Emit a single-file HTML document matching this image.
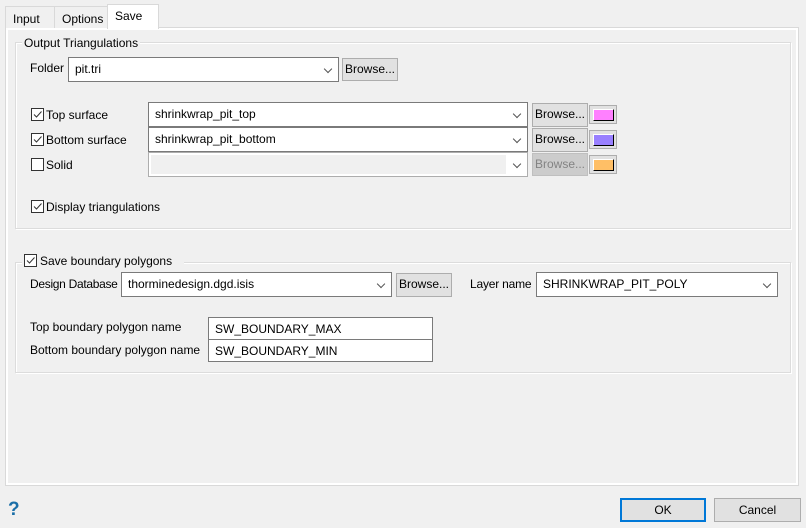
<!DOCTYPE html>
<html><head><style>
*{box-sizing:border-box;margin:0;padding:0}
body{width:806px;height:528px;background:#f0f0f0;font-family:"Liberation Sans",sans-serif;font-size:12px;color:#000;position:relative;overflow:hidden}
.a{position:absolute}
.t{position:absolute;white-space:nowrap;line-height:14px}
.tab{position:absolute;border:1px solid #d9d9d9;border-bottom:none;background:#f0f0f0;padding:5px 0 0 7px}
.panel{position:absolute;left:5px;top:27px;width:794px;height:459px;border:1px solid #d9d9d9;box-shadow:inset 0 0 0 2px #fff}
.grp{position:absolute;border:1px solid #dcdcdc;box-shadow:1px 1px 0 #fff, inset 1px 1px 0 #fff}
.cb{position:absolute;width:13px;height:13px;border:1px solid #333;background:#fff}
.cb svg{position:absolute;left:0;top:0}
.combo{position:absolute;background:#fff;border:1px solid #7a7a7a;padding:4px 0 0 6px;line-height:14px}
.combo.l{border-color:#adadad}
.combo:after{content:"";position:absolute;right:7px;top:8px;width:5px;height:5px;border-right:1px solid #555;border-bottom:1px solid #555;transform:rotate(45deg)}
.btn{position:absolute;background:#e1e1e1;border:1px solid #adadad;text-align:center;line-height:21px}
.sw{position:absolute;width:28px;height:19px;border:1px solid #adadad;background:#e1e1e1}
.sw i{position:absolute;left:3px;top:3px;width:21px;height:12px;border:1px solid #000;border-top-color:#fff;border-left-color:#fff}
.inp{position:absolute;background:#fff;border:1px solid #7a7a7a;padding:4px 0 0 6px;line-height:14px}
</style></head><body>
<div class="panel"></div>
<div class="tab" style="left:5px;top:6px;width:50px;height:22px">Input</div>
<div class="tab" style="left:54px;top:6px;width:54px;height:22px">Options</div>
<div class="tab" style="left:107px;top:4px;width:52px;height:25px;background:#fff;border-color:#d9d9d9;padding-top:4px">Save</div>

<div class="grp" style="left:15px;top:42px;width:776px;height:187px"></div>
<div class="t" style="left:22px;top:36px;background:#f0f0f0;padding:0 2px">Output Triangulations</div>
<div class="t" style="left:30px;top:61px">Folder</div>
<div class="combo" style="left:68px;top:57px;width:271px;height:25px">pit.tri</div>
<div class="btn" style="left:342px;top:58px;width:56px;height:23px">Browse...</div>

<div class="cb" style="left:31px;top:108px"><svg width="11" height="11"><path d="M2 5.5 L4.5 8 L9.5 2.5" fill="none" stroke="#333" stroke-width="1"/></svg></div>
<div class="t" style="left:46px;top:108px">Top surface</div>
<div class="combo" style="left:148px;top:102px;width:380px;height:25px">shrinkwrap_pit_top</div>
<div class="btn" style="left:532px;top:103px;width:56px;height:24px">Browse...</div>
<div class="sw" style="left:589px;top:105px"><i style="background:#ff80ff"></i></div>

<div class="cb" style="left:31px;top:133px"><svg width="11" height="11"><path d="M2 5.5 L4.5 8 L9.5 2.5" fill="none" stroke="#333" stroke-width="1"/></svg></div>
<div class="t" style="left:46px;top:133px">Bottom surface</div>
<div class="combo" style="left:148px;top:127px;width:380px;height:25px">shrinkwrap_pit_bottom</div>
<div class="btn" style="left:532px;top:128px;width:56px;height:24px">Browse...</div>
<div class="sw" style="left:589px;top:130px"><i style="background:#9980ff"></i></div>

<div class="cb" style="left:31px;top:158px"></div>
<div class="t" style="left:46px;top:158px">Solid</div>
<div class="combo l" style="left:148px;top:152px;width:380px;height:25px;background:#fff"><div class="a" style="left:2px;top:2px;width:355px;height:19px;background:#f0f0f0"></div></div>
<div class="btn" style="left:532px;top:153px;width:56px;height:23px;background:#ccc;border-color:#bfbfbf;color:#838383">Browse...</div>
<div class="sw" style="left:589px;top:155px"><i style="background:#ffbf66"></i></div>

<div class="cb" style="left:31px;top:200px"><svg width="11" height="11"><path d="M2 5.5 L4.5 8 L9.5 2.5" fill="none" stroke="#333" stroke-width="1"/></svg></div>
<div class="t" style="left:46px;top:200px">Display triangulations</div>

<div class="grp" style="left:15px;top:262px;width:776px;height:111px"></div>
<div class="a" style="left:22px;top:253px;width:162px;height:16px;background:#f0f0f0"></div>
<div class="cb" style="left:24px;top:254px"><svg width="11" height="11"><path d="M2 5.5 L4.5 8 L9.5 2.5" fill="none" stroke="#333" stroke-width="1"/></svg></div>
<div class="t" style="left:40px;top:254px">Save boundary polygons</div>
<div class="t" style="left:30px;top:277px;letter-spacing:-0.3px">Design Database</div>
<div class="combo" style="left:121px;top:272px;width:271px;height:25px">thorminedesign.dgd.isis</div>
<div class="btn" style="left:396px;top:273px;width:56px;height:24px">Browse...</div>
<div class="t" style="left:470px;top:277px;letter-spacing:-0.2px">Layer name</div>
<div class="combo" style="left:536px;top:272px;width:242px;height:25px">SHRINKWRAP_PIT_POLY</div>

<div class="t" style="left:30px;top:320px">Top boundary polygon name</div>
<div class="inp" style="left:208px;top:317px;width:225px;height:23px">SW_BOUNDARY_MAX</div>
<div class="t" style="left:30px;top:343px">Bottom boundary polygon name</div>
<div class="inp" style="left:208px;top:339px;width:225px;height:23px">SW_BOUNDARY_MIN</div>

<div class="t" style="left:8px;top:500px;font-size:19px;font-weight:bold;color:#1a6fa8;line-height:20px">?</div>
<div class="btn" style="left:620px;top:498px;width:86px;height:24px;border:2px solid #0078d7;line-height:20px">OK</div>
<div class="btn" style="left:714px;top:498px;width:87px;height:24px;line-height:22px">Cancel</div>
</body></html>
